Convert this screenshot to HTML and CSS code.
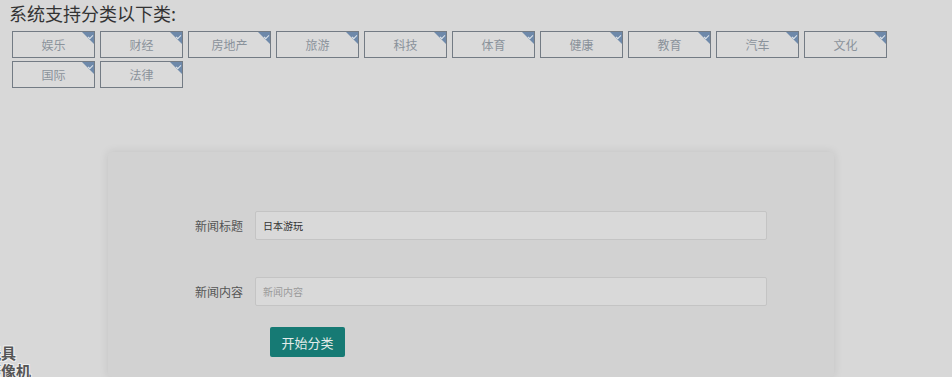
FILE: index.html
```html
<!DOCTYPE html>
<html lang="zh-CN">

<head>
    <meta charset="UTF-8">
    <meta name="viewport" content="width=device-width, initial-scale=1.0">
    <title>新闻分类</title>
    <link rel="stylesheet" href="styles.css">
</head>

<body>
    <h2 class="title">系统支持分类以下类:</h2>

    <!-- 分类标签 -->
    <div class="tag-list">
        <span class="tag">娱乐</span>
        <span class="tag">财经</span>
        <span class="tag">房地产</span>
        <span class="tag">旅游</span>
        <span class="tag">科技</span>
        <span class="tag">体育</span>
        <span class="tag">健康</span>
        <span class="tag">教育</span>
        <span class="tag">汽车</span>
        <span class="tag">文化</span>
        <span class="tag">国际</span>
        <span class="tag">法律</span>
    </div>

    <!-- 表单 -->
    <div class="card">
        <div class="form-row">
            <label for="title">新闻标题</label>
            <input type="text" id="title" value="日本游玩">
        </div>
        <div class="form-row">
            <label for="content">新闻内容</label>
            <input type="text" id="content" placeholder="新闻内容">
        </div>
        <div class="form-actions">
            <button type="button">开始分类</button>
        </div>
    </div>

    <div class="watermark">玩具<br>摄像机</div>
</body>

</html>
```

FILE: styles.css
```css
body {
    font-family: "Noto Sans CJK SC", "Noto Sans", sans-serif;
    margin: 0;
    padding: 0;
    background-color: #d8d8d8;
    color: #333;
    height: 377px;
    overflow: hidden;
    position: relative;
}

.title {
    margin: 0;
    padding: 1px 0 0 9px;
    font-size: 18px;
    font-weight: normal;
    line-height: 24px;
    color: #333;
}

.tag-list {
    display: flex;
    flex-wrap: wrap;
    gap: 3px 5px;
    width: 880px;
    margin: 6px 0 0 12px;
}

.tag {
    position: relative;
    width: 83px;
    height: 27px;
    box-sizing: border-box;
    border: 1px solid #737b84;
    background-color: #dadada;
    color: #8a929b;
    font-size: 12px;
    line-height: 25px;
    text-align: center;
    overflow: hidden;
}

/* 右上角的选中三角 */
.tag::before {
    content: "";
    position: absolute;
    top: 0;
    right: 0;
    border-top: 12px solid #6e89aa;
    border-left: 12px solid transparent;
}

.tag::after {
    content: "";
    position: absolute;
    top: 3px;
    right: 1px;
    width: 4px;
    height: 2px;
    border-left: 1px solid #dfe5ec;
    border-bottom: 1px solid #dfe5ec;
    transform: rotate(-45deg);
}

.card {
    width: 726px;
    margin: 64px 0 0 108px;
    padding: 59px 0 0;
    box-sizing: border-box;
    background-color: #d2d2d2;
    border-radius: 4px;
    box-shadow: 0 0 10px rgba(0, 0, 0, 0.1);
    height: 225px;
}

.form-row {
    display: flex;
    align-items: center;
    margin-bottom: 37px;
}

.form-row label {
    width: 135px;
    margin-right: 12px;
    text-align: right;
    font-size: 12px;
    color: #555;
}

.form-row input {
    width: 512px;
    height: 29px;
    box-sizing: border-box;
    padding: 0 7px;
    border: 1px solid #c4c4c4;
    border-radius: 2px;
    background-color: #d9d9d9;
    color: #333;
    font-family: inherit;
    font-size: 10px;
    outline: none;
}

.form-row:nth-child(2) {
    margin-bottom: 21px;
}

.form-row input::placeholder {
    color: #9a9a9a;
}

.form-actions {
    padding-left: 162px;
}

.form-actions button {
    width: 75px;
    height: 30px;
    border: none;
    border-radius: 2px;
    background-color: #167a74;
    color: #e4ecea;
    font-family: inherit;
    font-size: 13px;
    cursor: pointer;
}

.watermark {
    position: absolute;
    left: -14px;
    top: 344px;
    font-size: 15px;
    font-weight: bold;
    line-height: 18px;
    color: #555;
    text-shadow: 1px 1px 0 #eee, -1px -1px 0 #eee, 1px -1px 0 #eee, -1px 1px 0 #eee;
}
```
